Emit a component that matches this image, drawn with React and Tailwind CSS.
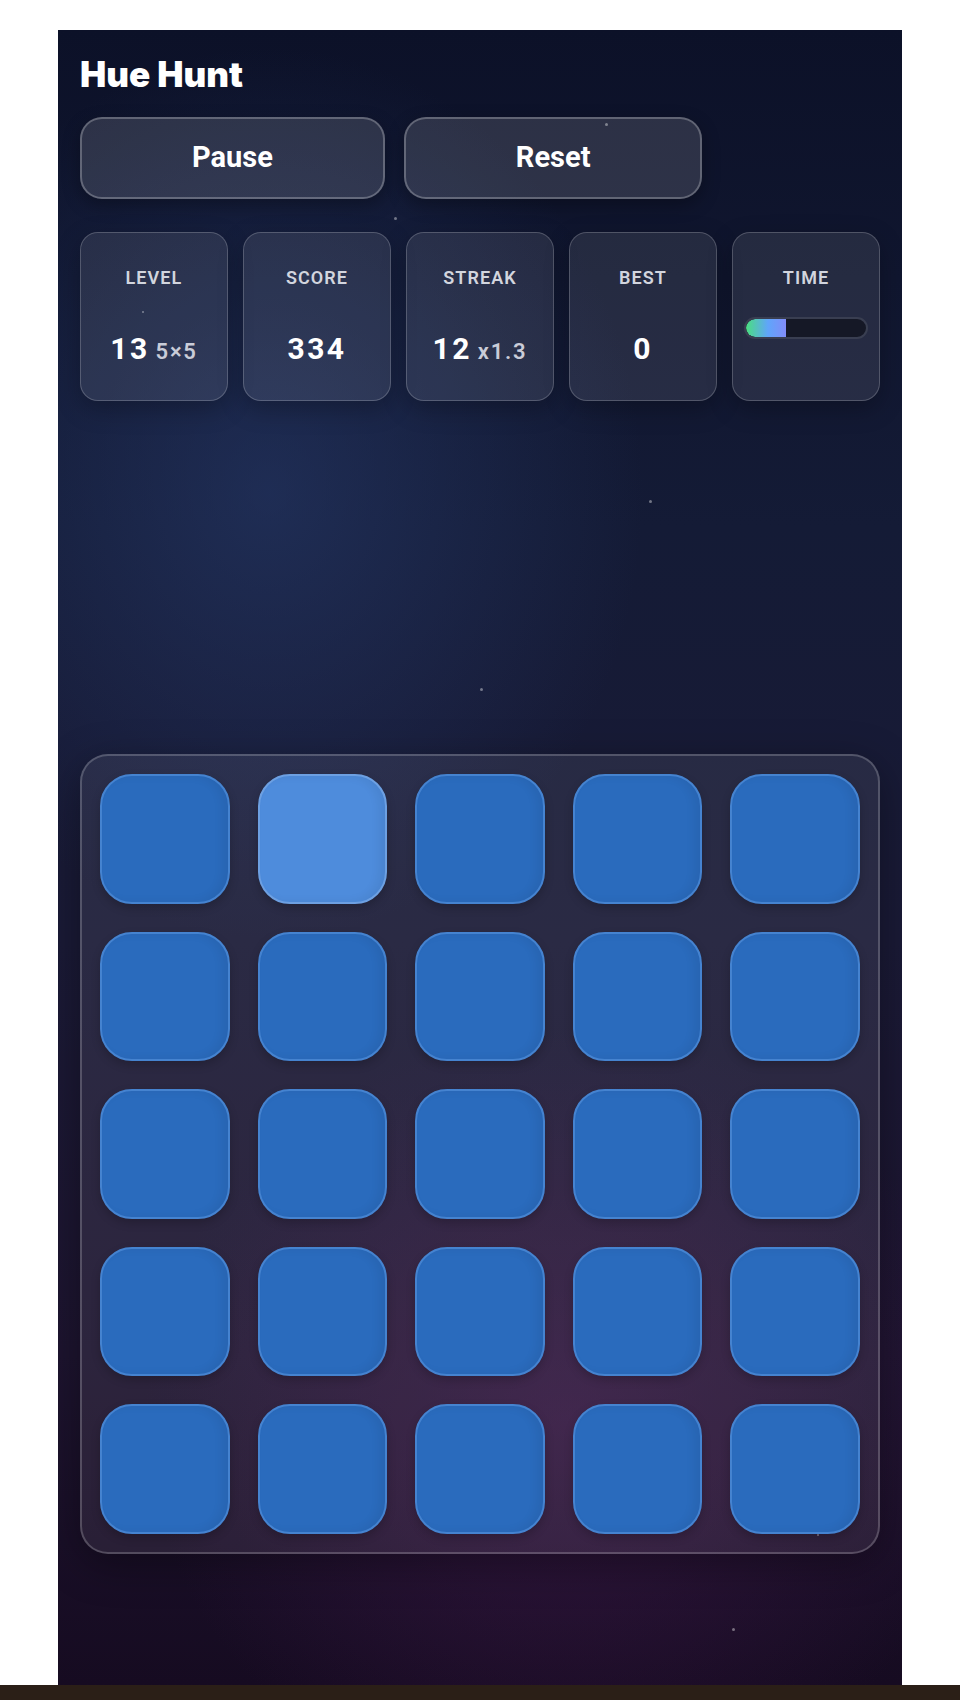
import React from 'react';

const stats = [
  { label: 'LEVEL', value: '13', sub: '5×5' },
  { label: 'SCORE', value: '334' },
  { label: 'STREAK', value: '12', sub: 'x1.3' },
  { label: 'BEST', value: '0' },
];

// decorative specks in the background
const stars = [
  { x: 336, y: 187, s: 3 },
  { x: 547, y: 93, s: 3 },
  { x: 84, y: 281, s: 2 },
  { x: 591, y: 470, s: 3 },
  { x: 422, y: 658, s: 3 },
  { x: 674, y: 1598, s: 3 },
  { x: 759, y: 1504, s: 2 },
];

const ODD_TILE = 1;

const StatCard = ({ label, children }) => (
  <div className="h-[169px] rounded-[18px] border border-white/20 bg-white/[0.09] px-[11px] pt-[34px] shadow-[0_8px_24px_rgba(0,0,0,0.25)] flex flex-col items-center">
    <div className="text-[18px] leading-[22px] font-semibold tracking-[0.06em] text-[#d2d5de]">{label}</div>
    {children}
  </div>
);

const App = () => {
  return (
    <div className="min-h-[1700px] bg-white pt-[30px]" style={{ fontFamily: 'Roboto, "Liberation Sans", sans-serif' }}>
      <div className="relative mx-auto w-[844px] h-[1655px] overflow-hidden px-[22px] pt-[24px] bg-[radial-gradient(ellipse_520px_620px_at_25%_28%,rgba(40,60,110,0.55),transparent_72%),radial-gradient(ellipse_600px_560px_at_60%_84%,rgba(74,28,84,0.5),transparent_70%),linear-gradient(180deg,#0c1128_0%,#141b36_30%,#1a1a36_55%,#1d142f_80%,#160b21_100%)]">
        {stars.map((st, i) => (
          <span
            key={i}
            className="absolute rounded-full bg-white/40"
            style={{ left: st.x, top: st.y, width: st.s, height: st.s }}
          />
        ))}

        <h1 className="relative text-[35px] leading-[40px] font-black text-white" style={{ fontFamily: 'Inter, "Noto Sans", sans-serif' }}>
          Hue Hunt
        </h1>

        <div className="relative mt-[23px] flex gap-[19px]">
          {['Pause', 'Reset'].map((b) => (
            <button
              key={b}
              className="h-[82px] px-[110px] rounded-[22px] border-2 border-white/25 bg-white/[0.13] text-[29px] font-bold text-white shadow-[0_6px_18px_rgba(0,0,0,0.3)]"
            >
              {b}
            </button>
          ))}
        </div>

        <div className="relative mt-[33px] grid grid-cols-5 gap-[15px]">
          {stats.map((s) => (
            <StatCard key={s.label} label={s.label}>
              <div className="mt-[42px] flex items-baseline text-white">
                <span className="text-[30px] leading-[36px] font-bold tracking-[0.08em]">{s.value}</span>
                {s.sub && (
                  <span className="ml-[6px] text-[22px] font-semibold tracking-[0.08em] text-[#c9ccd8]">{s.sub}</span>
                )}
              </div>
            </StatCard>
          ))}
          <StatCard label="TIME">
            <div className="mt-[28px] h-[22px] w-full rounded-full border-2 border-[#393e51] bg-[#151826] overflow-hidden">
              <div className="h-full w-[33%] rounded-l-full bg-[linear-gradient(90deg,#4ade80,#60a5fa_55%,#818cf8)]" />
            </div>
          </StatCard>
        </div>

        <div className="relative mt-[353px] aspect-square w-full rounded-[28px] border-2 border-white/20 bg-white/[0.07] p-[18px] shadow-[0_10px_40px_rgba(0,0,0,0.35)] grid grid-cols-5 grid-rows-5 gap-[28px]">
          {Array.from({ length: 25 }).map((_, i) => (
            <div
              key={i}
              className={
                i === ODD_TILE
                  ? 'rounded-[32px] border-2 border-[#6da0e2] bg-[#4e8cdc] shadow-[inset_-6px_0_10px_rgba(0,0,0,0.06),0_4px_10px_rgba(0,0,0,0.2)]'
                  : 'rounded-[32px] border-2 border-[#4583d0] bg-[#2a6bbd] shadow-[inset_-6px_0_10px_rgba(0,0,0,0.06),0_4px_10px_rgba(0,0,0,0.2)]'
              }
            />
          ))}
        </div>
      </div>
      <div className="h-[15px] w-full bg-[#2b1f17]" />
    </div>
  );
};

export default App;
